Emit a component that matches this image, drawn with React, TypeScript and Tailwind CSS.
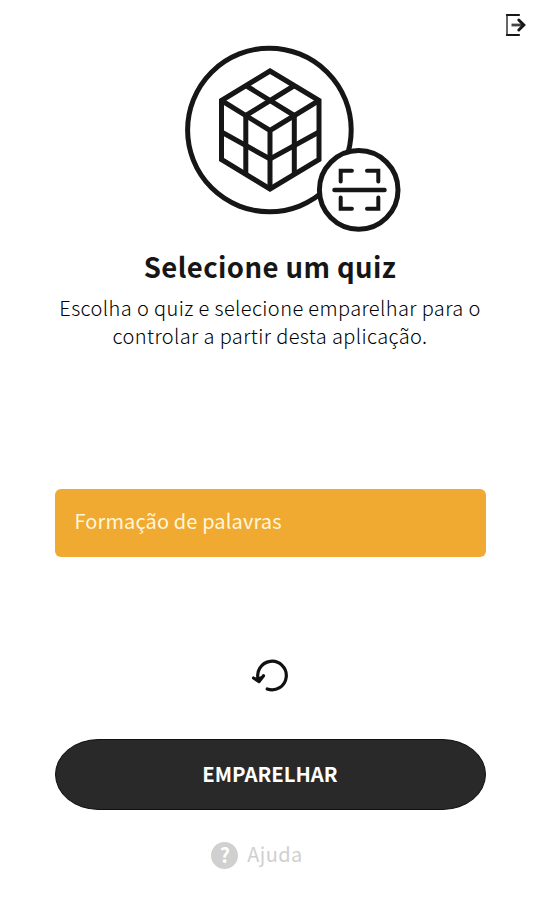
import { useState } from "react";

function LogoutIcon() {
  return (
    <svg width="24" height="26" viewBox="0 0 24 26" fill="none" stroke="#161616">
      <path d="M3 2v22" stroke="#666" strokeWidth="2" />
      <path d="M3 3H15M3 23H15" strokeWidth="2.200" strokeLinecap="round" />
      <path d="M7.500 13H19" stroke="#444" strokeWidth="2.800" />
      <path d="M14.800 8l5 5-5 5" strokeWidth="3" strokeLinecap="round" />
    </svg>
  );
}

function QuizIllustration() {
  return (
    <svg width="218" height="188" viewBox="184 45 218 188" fill="none" stroke="#161616">
      <circle cx="269.400" cy="130" r="81.800" strokeWidth="5" />
      {/* Cube */}
      <g strokeWidth="5">
        <path d="M270 71l49 29.500v59l-49 29.500-48.500-29.500v-59z" />
        <path d="M221.500 100.500l48.500 30 49-30M270 130.500v59" />
        <path d="M245.800 85.500l48.500 30V174M294.500 85.500l-48.700 30V174" />
        <path d="M221.500 132l48.500 27 49-27" />
      </g>
      {/* Scanner badge */}
      <circle cx="358.700" cy="189.900" r="39.300" fill="#fff" strokeWidth="5" />
      <g strokeWidth="4" strokeLinecap="round">
        <path d="M340.700 181.500v-10.700h11.200M367 170.800h11.300v10.700M378.300 197.500v11.200H367M351.900 208.700h-11.200v-11.200" />
        <path d="M334.500 190h50" strokeWidth="4.500" />
      </g>
    </svg>
  );
}

function ReloadIcon() {
  return (
    <svg
      width="40"
      height="36"
      viewBox="250 656.500 40 36"
      fill="none"
      stroke="#111"
      strokeWidth="3.200"
      strokeLinecap="round"
      strokeLinejoin="round"
    >
      <path d="M267.200 688.500A14.300 14.300 0 1 0 258.600 680" />
      <path d="M253.500 677.500l5.600 3.600 4.400-5.800" fill="#111" />
    </svg>
  );
}

export default function App() {
  const [selected, setSelected] = useState(true);

  return (
    <main className="relative flex h-[900px] w-[540px] flex-col items-center overflow-hidden bg-white font-['Noto_Sans_CJK_SC',sans-serif] text-[#161616]">
      <button aria-label="Sair" className="absolute top-3 right-[12px]">
        <LogoutIcon />
      </button>

      <div className="mt-[45px] ml-[46px] h-[188px]">
        <QuizIllustration />
      </div>

      <h1 className="mt-[13px] text-[27.500px] leading-10 font-bold tracking-[0.400px] whitespace-nowrap">
        Selecione um quiz
      </h1>
      <p className="mt-2 text-center text-[20px] leading-7 font-light tracking-[0.400px] whitespace-nowrap text-black">
        Escolha o quiz e selecione emparelhar para o
        <br />
        controlar a partir desta aplicação.
      </p>

      <button
        onClick={() => setSelected(!selected)}
        aria-pressed={selected}
        className="mt-[139px] flex h-[68px] w-[431px] items-center rounded-md bg-[#f0aa31] px-5 pb-1 text-[20px] tracking-[0.120px] text-[#fff6dc]"
      >
        Formação de palavras
      </button>

      <button aria-label="Atualizar" className="mt-[100px] h-9">
        <ReloadIcon />
      </button>

      <button className="mt-[46px] flex h-[71px] w-[431px] items-center justify-center rounded-[44px/36px] border border-[#111] bg-[#292929] pb-0.5 text-[20.300px] font-bold text-white">
        EMPARELHAR
      </button>

      <a href="#ajuda" className="mt-[29px] mr-[26px] flex h-8 items-center gap-[9px] text-[20px] text-[#d0d0d0]">
        <span className="flex size-[27px] items-center justify-center rounded-full bg-[#d0d0d0] text-[20px] leading-none font-bold text-white">
          ?
        </span>
        <span className="mb-[3px] tracking-[0.400px]">Ajuda</span>
      </a>
    </main>
  );
}
